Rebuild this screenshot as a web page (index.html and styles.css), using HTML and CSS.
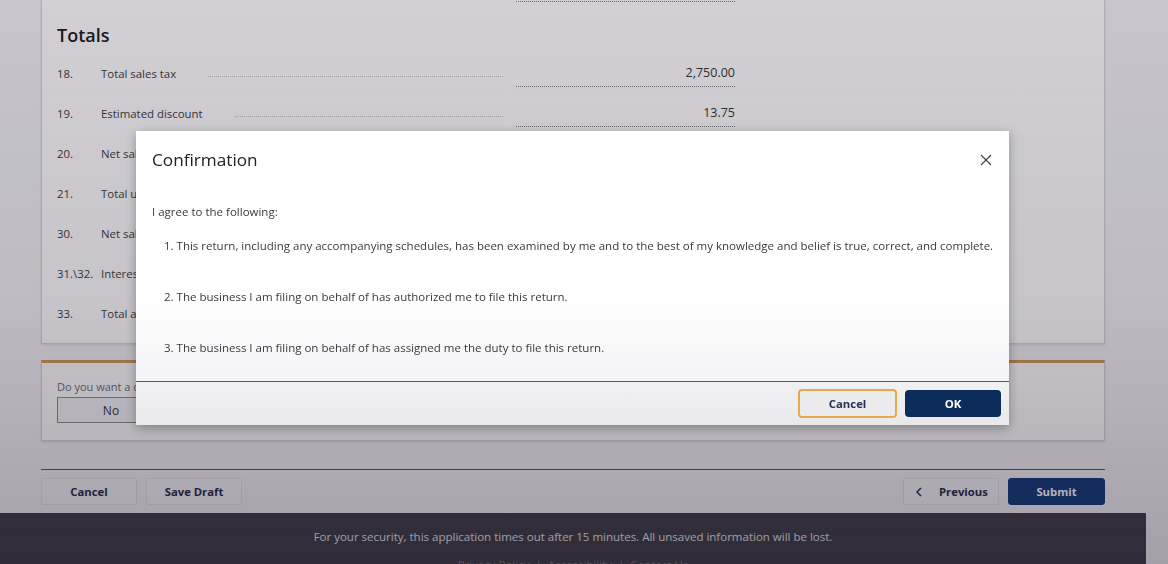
FILE: index.html
```html
<!DOCTYPE html>
<html lang="en">
<head>
<meta charset="utf-8">
<title>Sales and Use Tax Return</title>
<link rel="stylesheet" href="styles.css">
</head>
<body>
<div class="page">
  <main class="content">
    <section class="card totals-card">
      <div class="row">
        <span class="num">17.</span>
        <span class="label">Total taxable sales</span>
        <span class="leader"></span>
        <span class="field">0.00</span>
      </div>
      <h2 class="section-title">Totals</h2>
      <div class="row">
        <span class="num">18.</span>
        <span class="label">Total sales tax</span>
        <span class="leader"></span>
        <span class="field">2,750.00</span>
      </div>
      <div class="row">
        <span class="num">19.</span>
        <span class="label">Estimated discount</span>
        <span class="leader"></span>
        <span class="field">13.75</span>
      </div>
      <div class="row">
        <span class="num">20.</span>
        <span class="label">Net sales tax due</span>
        <span class="leader"></span>
        <span class="field">2,736.25</span>
      </div>
      <div class="row">
        <span class="num">21.</span>
        <span class="label">Total use tax</span>
        <span class="leader"></span>
        <span class="field">0.00</span>
      </div>
      <div class="row">
        <span class="num">30.</span>
        <span class="label">Net sales and use tax due</span>
        <span class="leader"></span>
        <span class="field">2,736.25</span>
      </div>
      <div class="row">
        <span class="num">31.\32.</span>
        <span class="label">Interest and penalty</span>
        <span class="leader"></span>
        <span class="field">0.00</span>
      </div>
      <div class="row">
        <span class="num">33.</span>
        <span class="label">Total amount due</span>
        <span class="leader"></span>
        <span class="field">2,736.25</span>
      </div>
    </section>

    <section class="card question-card">
      <p class="question">Do you want a copy of this return sent to your email address?</p>
      <div class="toggle">
        <button class="toggle-opt">No</button>
        <button class="toggle-opt">Yes</button>
      </div>
    </section>

    <div class="actions">
      <div class="actions-group">
        <button class="btn">Cancel</button>
        <button class="btn">Save Draft</button>
      </div>
      <div class="actions-group">
        <button class="btn btn-prev">
          <svg class="chev" width="6" height="10" viewBox="0 0 6 10"><path d="M5 1 L1 5 L5 9" stroke="#1f2b45" stroke-width="1.5" fill="none"/></svg>
          <span>Previous</span>
        </button>
        <button class="btn btn-primary">Submit</button>
      </div>
    </div>
  </main>

  <footer class="site-footer">
    <p>For your security, this application times out after 15 minutes. All unsaved information will be lost.</p>
    <p class="footer-links">Privacy Policy &nbsp;|&nbsp; Accessibility &nbsp;|&nbsp; Contact Us</p>
  </footer>
</div>

<div class="backdrop"></div>

<div class="modal" role="dialog" aria-labelledby="confirm-title">
  <header class="modal-header">
    <h1 id="confirm-title" class="modal-title">Confirmation</h1>
    <button class="modal-close" aria-label="Close">
      <svg width="12" height="12" viewBox="0 0 12 12"><path d="M1 1 L11 11 M11 1 L1 11" stroke="#444" stroke-width="1.2" fill="none"/></svg>
    </button>
  </header>
  <div class="modal-body">
    <p class="intro">I agree to the following:</p>
    <ol class="terms">
      <li>1. This return, including any accompanying schedules, has been examined by me and to the best of my knowledge and belief is true, correct, and complete.</li>
      <li>2. The business I am filing on behalf of has authorized me to file this return.</li>
      <li>3. The business I am filing on behalf of has assigned me the duty to file this return.</li>
    </ol>
  </div>
  <footer class="modal-footer">
    <button class="mbtn mbtn-cancel">Cancel</button>
    <button class="mbtn mbtn-ok">OK</button>
  </footer>
</div>
</body>
</html>
```

FILE: styles.css
```css
* { box-sizing: border-box; }

html, body {
  margin: 0;
  height: 100%;
  overflow: hidden;
}

body {
  font-family: "Open Sans", "Noto Sans", sans-serif;
  background: #f3f2f5;
  color: #333;
}

.page {
  width: 1146px;
}

.content {
  padding: 0 41px;
}

button {
  font-family: inherit;
  cursor: pointer;
}

/* ---- form cards ---- */
.card {
  background: #fff;
  border: 1px solid #d6d5d9;
  box-shadow: 0 1px 2px rgba(0, 0, 0, 0.12);
}

.totals-card {
  margin-top: -33px;
  padding: 0 15px 10px;
}

.section-title {
  margin: 15px 0 6px;
  font-size: 18px;
  line-height: 24px;
  font-weight: 600;
  color: #1a1a1a;
}

.row {
  display: flex;
  align-items: center;
  width: 678px;
  height: 40px;
  font-size: 11.4px;
  color: #3c3c40;
}

.num {
  width: 44px;
  flex: none;
}

.label {
  flex: none;
}

.leader {
  flex: 1;
  margin: 7px 13px 0 32px;
  border-bottom: 1px dotted #c4c3c8;
}

.field {
  width: 219px;
  height: 28px;
  flex: none;
  display: flex;
  align-items: center;
  justify-content: flex-end;
  border-bottom: 1px dotted #7e7d84;
  font-size: 12.5px;
  color: #333;
}

.question-card {
  margin-top: 16px;
  border-top: 3px solid #cf9a55;
  padding: 17px 15px 17px;
}

.question {
  margin: 0 0 3px;
  font-size: 11px;
  line-height: 14px;
  color: #6b6b71;
}

.toggle {
  display: flex;
}

.toggle-opt {
  width: 108px;
  height: 26px;
  border: 1px solid #8d8c92;
  background: #f6f6f8;
  font-size: 12px;
  color: #333;
}

.toggle-opt + .toggle-opt {
  border-left: none;
}

/* ---- page actions ---- */
.actions {
  margin-top: 28px;
  border-top: 1px solid #4b5675;
  padding-top: 8px;
  display: flex;
  justify-content: space-between;
}

.actions-group {
  display: flex;
  gap: 9px;
}

.btn {
  width: 96px;
  height: 27px;
  border: 1px solid #e4e3e7;
  background: #f5f5f7;
  font-size: 11.3px;
  font-weight: 700;
  color: #1f2b45;
  border-radius: 2px;
}

.btn-prev {
  display: flex;
  align-items: center;
  gap: 17px;
  padding: 0 0 0 12px;
}

.chev {
  flex: none;
}

.btn-primary {
  width: 97px;
  background: #103a78;
  border-color: #103a78;
  color: #fff;
  border-radius: 3px;
}

.site-footer {
  margin-top: 8px;
  background: #3d3c42;
  padding: 17px 0 0;
  height: 70px;
  text-align: center;
  font-size: 11.5px;
  line-height: 14px;
  color: #e6e5e9;
}

.site-footer p {
  margin: 0;
}

.site-footer .footer-links {
  margin-top: 14px;
  color: #77767c;
}

/* ---- modal ---- */
.backdrop {
  position: fixed;
  inset: 0;
  background: linear-gradient(180deg, rgba(30, 20, 40, 0.2) 0%, rgba(30, 20, 40, 0.25) 55%, rgba(30, 20, 40, 0.37) 100%);
}

.modal {
  position: absolute;
  left: 136px;
  top: 131px;
  width: 873px;
  background: #fff;
  box-shadow: 0 3px 10px rgba(0, 0, 0, 0.3);
}

.modal-header {
  display: flex;
  align-items: center;
  justify-content: space-between;
  height: 57px;
  padding: 0 17px 0 16px;
}

.modal-title {
  margin: 0;
  font-size: 17.2px;
  font-weight: 400;
  color: #222;
}

.modal-close {
  border: none;
  background: none;
  padding: 0;
  width: 12px;
  height: 12px;
  display: flex;
}

.modal-body {
  padding: 16px 8px 25px 16px;
  font-size: 11.5px;
  line-height: 16px;
  color: #3a3a3e;
  background: linear-gradient(180deg, #fff 0%, #fff 55%, #f4f3f6 100%);
}

.intro {
  margin: 0 0 18px;
}

.terms {
  list-style: none;
  margin: 0;
  padding: 0 0 0 12px;
}

.terms li {
  white-space: nowrap;
}

.terms li + li {
  margin-top: 35px;
}

.modal-footer {
  border-top: 1px solid #4e5870;
  background: linear-gradient(180deg, #f1f0f3 0%, #e9e8eb 100%);
  height: 44px;
  display: flex;
  justify-content: flex-end;
  align-items: center;
  gap: 8px;
  padding: 0 8px 0 0;
}

.mbtn {
  height: 29px;
  font-size: 11.4px;
  font-weight: 700;
  border-radius: 4px;
}

.mbtn-cancel {
  width: 99px;
  border: 2px solid #eaa84e;
  background: #ececef;
  color: #22345a;
}

.mbtn-ok {
  width: 96px;
  height: 27px;
  border: none;
  background: #0c2d5c;
  color: #fff;
}
```
